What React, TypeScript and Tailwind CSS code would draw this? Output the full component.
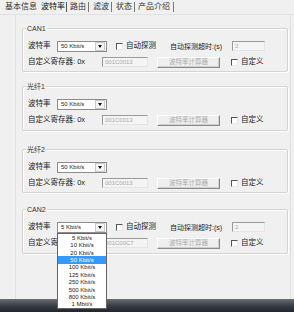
import React from 'react';

const font = { fontFamily: '"Liberation Sans", "Noto Sans CJK SC", sans-serif' };

function Check({ label }: { label: string }) {
  return (
    <div className="flex items-center">
      <span className="w-[7px] h-[7px] bg-white border-t border-l border-[#555] border-r border-b border-r-[#e8e8e8] border-b-[#e8e8e8]" />
      <span className="ml-[3px] text-[7.5px] text-[#222] leading-none">{label}</span>
    </div>
  );
}

function Select({ value }: { value: string }) {
  return (
    <div className="w-[50px] h-[11px] bg-white border border-[#8c8c8c] flex items-center">
      <span className="flex-1 pl-[3px] text-[6px] text-[#222] leading-none">{value}</span>
      <span className="w-[10px] h-[9px] mr-[1px] bg-[#f4f4f4] border border-[#c8c8c8] flex items-center justify-center">
        <span className="w-0 h-0 border-l-[2.5px] border-r-[2.5px] border-t-[3px] border-l-transparent border-r-transparent border-t-[#111]" />
      </span>
    </div>
  );
}

function Field({ value, w }: { value: string; w: string }) {
  return (
    <div className={`${w} h-[10px] bg-[#f4f4f4] border-t border-l border-[#9a9a9a] border-r border-b border-r-[#e4e4e4] border-b-[#e4e4e4] flex items-center`}>
      <span className="pl-[2px] text-[6px] text-[#a8a8a8] leading-none">{value}</span>
    </div>
  );
}

function Group({
  title,
  sel,
  reg,
  full,
  className,
}: {
  title: string;
  sel: string;
  reg: string;
  full?: boolean;
  className: string;
}) {
  return (
    <div className={`relative border border-[#d4d4d4] rounded-[2px] shadow-[inset_1px_1px_0_#fff,1px_1px_0_#fff] pt-[11px] pl-[5px] ${className}`}>
      <span className="absolute -top-[5px] left-[3px] px-[1px] bg-[#f0f0f0] text-[7px] leading-[9px] text-[#333]">
        {title}
      </span>
      <div className="flex items-center h-[12px]">
        <span className="w-[29px] text-[7.5px] text-[#222] leading-none">波特率</span>
        <Select value={sel} />
        {full && (
          <>
            <div className="ml-[9px] w-[54px]">
              <Check label="自动探测" />
            </div>
            <span className="w-[62px] text-[7px] text-[#222] leading-none">自动探测超时:(s)</span>
            <Field value="2" w="w-[33px]" />
          </>
        )}
      </div>
      <div className="flex items-center h-[12px] mt-[4px]">
        <span className="w-[74px] text-[7.5px] text-[#222] leading-none">自定义寄存器: 0x</span>
        <Field value={reg} w="w-[46px]" />
        <div className="ml-[9px] w-[63px] h-[11px] bg-[#efefef] border border-t-white border-l-white border-r-[#8a8a8a] border-b-[#8a8a8a] shadow-[inset_-1px_-1px_0_#cfcfcf] flex items-center justify-center">
          <span className="text-[6.5px] text-[#ababab] leading-none">波特率计算器</span>
        </div>
        <div className="ml-[11px]">
          <Check label="自定义" />
        </div>
      </div>
    </div>
  );
}

const rates = ['5 Kbit/s', '10 Kbit/s', '20 Kbit/s', '50 Kbit/s', '100 Kbit/s', '125 Kbit/s', '250 Kbit/s', '500 Kbit/s', '800 Kbit/s', '1 Mbit/s'];

export default function App() {
  return (
    <div className="relative w-[294px] h-[312px] bg-[#f0f0f0] overflow-hidden flex flex-col" style={font}>
      {/* tabs */}
      <div className="flex items-center h-[15px] text-[8px] leading-none text-[#333] border-b border-[#e2e2e2]">
        <span className="ml-[5px]">基本信息</span>
        <span className="ml-[4px] text-[#111]">波特率</span>
        <span className="ml-[1px] w-px h-[10px] bg-[#555]" />
        <span className="ml-[3px]">路由</span>
        <span className="ml-[2px] w-px h-[10px] bg-[#777]" />
        <span className="ml-[4px]">滤波</span>
        <span className="ml-[2px] w-px h-[10px] bg-[#777]" />
        <span className="ml-[4px]">状态</span>
        <span className="ml-[2px] w-px h-[10px] bg-[#777]" />
        <span className="ml-[3px]">产品介绍</span>
        <span className="ml-[3px] w-px h-[10px] bg-[#777]" />
      </div>

      {/* panel */}
      <div className="flex-1 ml-[15px] mr-[3px] border-l border-r border-[#e0e0e0] pl-[6px] pr-[2px]">
        <Group title="CAN1" sel="50 Kbit/s" reg="001C0013" full className="mt-[13px] h-[44px]" />
        <Group title="光纤1" sel="50 Kbit/s" reg="001C0013" className="mt-[14px] h-[45px]" />
        <Group title="光纤2" sel="50 Kbit/s" reg="001C0013" className="mt-[18px] h-[44px]" />
        <Group title="CAN2" sel="5 Kbit/s" reg="001C00C7" full className="mt-[16px] h-[45px]" />
      </div>

      {/* bottom bar */}
      <div className="h-[13px] bg-gradient-to-b from-[#6a6e75] via-[#3a3e45] to-[#22252a]" />

      {/* open dropdown list */}
      <div className="absolute left-[57px] top-[233px] w-[50px] h-[76px] bg-white border border-[#646464] flex flex-col">
        {rates.map((r) => (
          <div
            key={r}
            className={`flex-1 flex items-center justify-center text-[6px] leading-none ${
              r === '50 Kbit/s' ? 'bg-[#3399ff] text-white' : 'text-[#222]'
            }`}
          >
            {r}
          </div>
        ))}
      </div>
    </div>
  );
}
